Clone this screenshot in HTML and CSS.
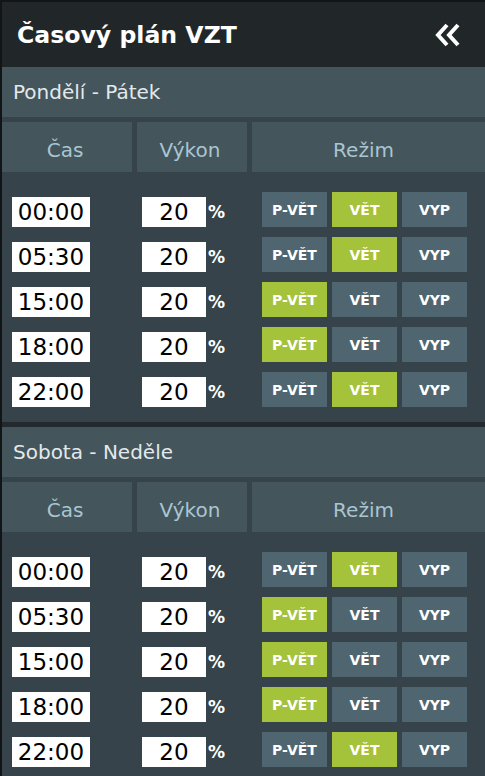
FILE: index.html
```html
<!DOCTYPE html>
<html lang="cs">
<head>
  <meta charset="UTF-8" />
  <meta name="viewport" content="width=device-width, initial-scale=1.0"/>
  <title>Časový plán VZT</title>
  <link rel="stylesheet" href="styles.css">
</head>
<body>
  <div class="panel">
    <header class="title-bar">
      <h1>Časový plán VZT</h1>
      <svg class="collapse" width="26" height="24" viewBox="0 0 26 24">
        <polyline points="12,2 3,12 12,22" />
        <polyline points="23,2 14,12 23,22" />
      </svg>
    </header>

    <section class="day">
      <div class="day-name">Pondělí - Pátek</div>
      <div class="cols">
        <div>Čas</div><div>Výkon</div><div class="mode-col">Režim</div>
      </div>
      <div class="rows" id="week"></div>
    </section>

    <section class="day">
      <div class="day-name">Sobota - Neděle</div>
      <div class="cols">
        <div>Čas</div><div>Výkon</div><div class="mode-col">Režim</div>
      </div>
      <div class="rows" id="weekend"></div>
    </section>
  </div>

  <script>
    const modes = ["P-VĚT", "VĚT", "VYP"];

    const week = [
      { time: "00:00", power: 20, mode: 1 },
      { time: "05:30", power: 20, mode: 1 },
      { time: "15:00", power: 20, mode: 0 },
      { time: "18:00", power: 20, mode: 0 },
      { time: "22:00", power: 20, mode: 1 }
    ];
    const weekend = [
      { time: "00:00", power: 20, mode: 1 },
      { time: "05:30", power: 20, mode: 0 },
      { time: "15:00", power: 20, mode: 0 },
      { time: "18:00", power: 20, mode: 0 },
      { time: "22:00", power: 20, mode: 1 }
    ];

    function renderRows(el, list) {
      list.forEach(item => {
        const row = document.createElement("div");
        row.className = "row";
        row.innerHTML = `
          <div class="cell"><span class="time">${item.time}</span></div>
          <div class="cell power"><span class="value">${item.power}</span><span class="pct">%</span></div>
          <div class="cell modes">
            ${modes.map((m, i) => `<button class="mode${i === item.mode ? " on" : ""}">${m}</button>`).join("")}
          </div>
        `;
        el.appendChild(row);
      });
    }

    renderRows(document.getElementById("week"), week);
    renderRows(document.getElementById("weekend"), weekend);
  </script>
</body>
</html>
```

FILE: styles.css
```css
body {
  margin: 0;
  font-family: "DejaVu Sans", Verdana, sans-serif;
  background: #37434a;
}
.panel {
  width: 483px;
  border-left: 2px solid #111516;
  border-top: 2px solid #111516;
  background: #37434a;
  min-height: 774px;
}
.title-bar {
  height: 65px;
  background: #212729;
  display: flex;
  align-items: center;
  justify-content: space-between;
  padding: 0 24px 0 15px;
}
.title-bar h1 {
  margin: 0;
  color: #fff;
  font-size: 23.6px;
  font-weight: bold;
}
.collapse polyline {
  fill: none;
  stroke: #fff;
  stroke-width: 4;
}
.day {
  border-bottom: 5px solid #232a2e;
}
.day:last-child {
  border-bottom: none;
}
.day-name {
  height: 50px;
  line-height: 50px;
  padding-left: 11px;
  background: #44555c;
  color: #e3e9eb;
  font-size: 20px;
}
.cols {
  display: grid;
  grid-template-columns: 130px 110px 1fr;
  gap: 5px;
  margin-top: 5px;
}
.cols div {
  height: 44px;
  padding-top: 6px;
  line-height: 44px;
  background: #44555c;
  color: #a9c5d1;
  font-size: 20px;
  text-align: center;
  padding-right: 4px;
}
.cols .mode-col {
  padding-right: 10px;
}
.rows {
  display: flex;
  flex-direction: column;
  gap: 10px;
  padding: 20px 0 15px;
}
.row {
  display: grid;
  grid-template-columns: 130px 110px 1fr;
  gap: 5px;
  height: 35px;
}
.cell {
  display: flex;
  align-items: flex-end;
}
.time, .value {
  height: 30px;
  line-height: 31px;
  background: #fff;
  color: #000;
  font-size: 23px;
  text-align: center;
}
.time {
  width: 78px;
  margin-left: 10px;
}
.value {
  width: 64px;
  margin-left: 5px;
}
.pct {
  color: #fff;
  font-size: 17px;
  font-weight: bold;
  margin-left: 2px;
  line-height: 17px;
  margin-bottom: 6px;
}
.modes {
  align-items: stretch;
  gap: 5px;
  padding-left: 10px;
}
.mode {
  width: 65px;
  border: none;
  padding: 0;
  background: #4f6670;
  color: #fff;
  font-family: "DejaVu Sans", Verdana, sans-serif;
  font-size: 14px;
  font-weight: bold;
  cursor: pointer;
}
.mode.on {
  background: #a5c23b;
}
```
